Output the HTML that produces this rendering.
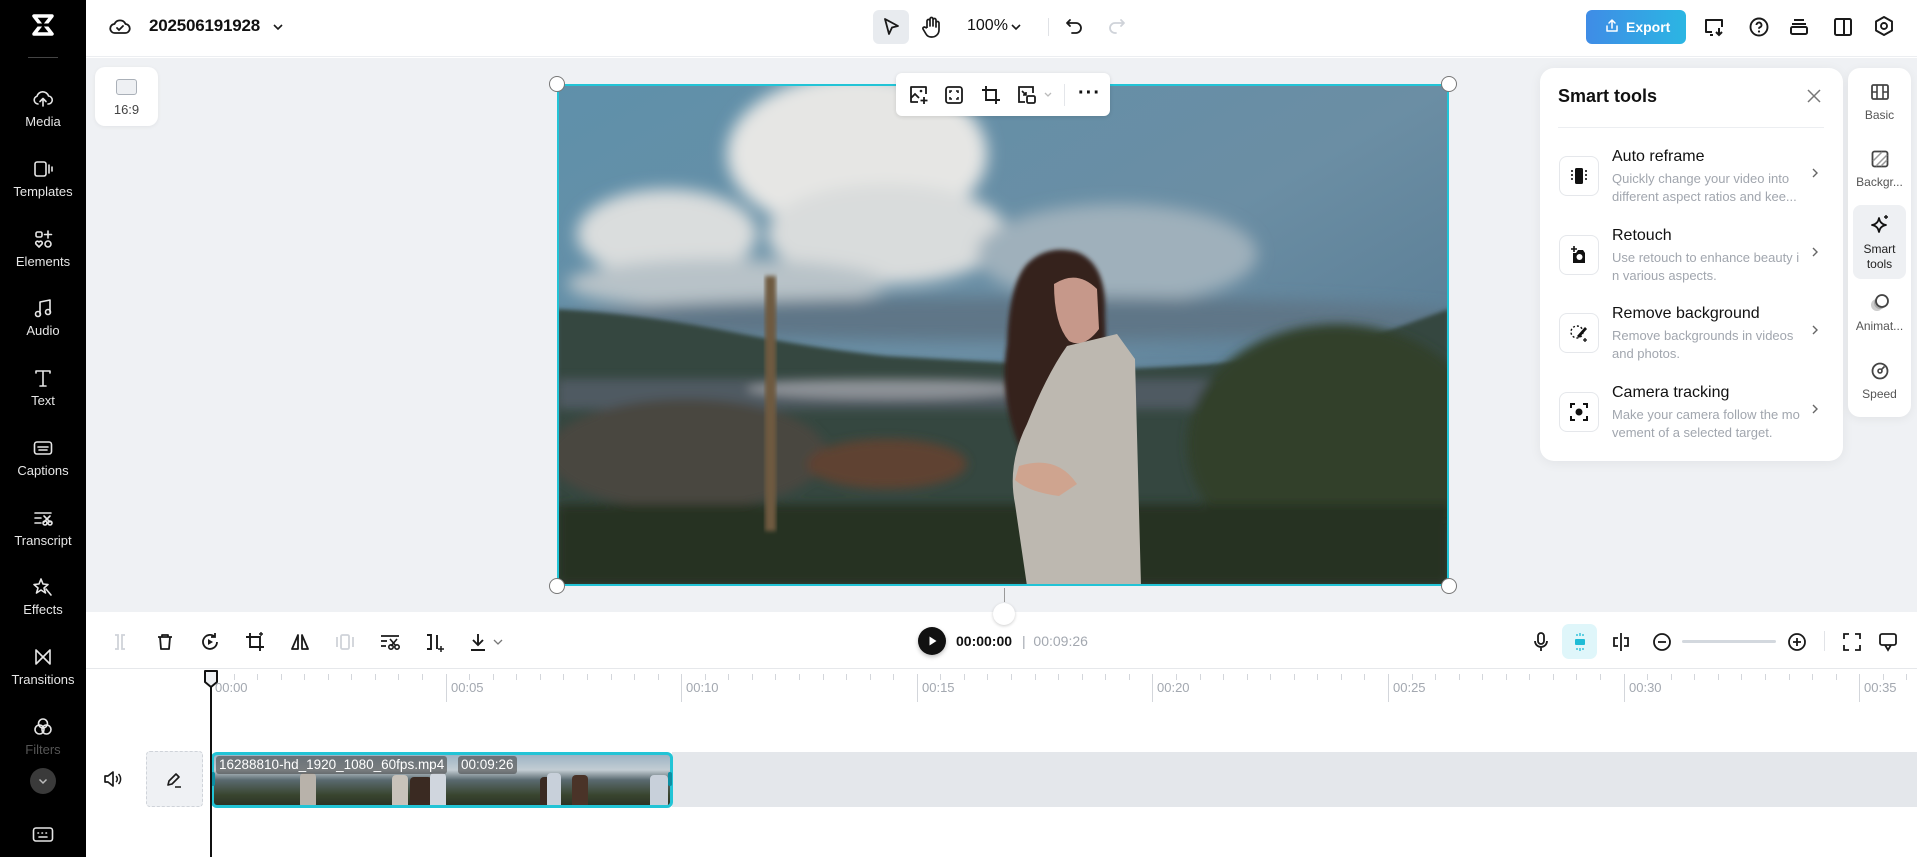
<!DOCTYPE html>
<html><head><meta charset="utf-8">
<style>
*{box-sizing:border-box;margin:0;padding:0}
body{width:1917px;height:857px;overflow:hidden;background:#fff;font-family:"Liberation Sans",sans-serif;position:relative;color:#111}
.abs{position:absolute}
svg{display:block}
.sb{position:absolute;left:0;top:0;width:86px;height:857px;background:#000}
.si{position:absolute;left:0;width:86px;text-align:center;color:#e6e6e6;font-size:13px}
.si svg{margin:0 auto 4px}
.wi{stroke:#e6e6e6;fill:none;stroke-width:1.6;stroke-linecap:round;stroke-linejoin:round}
.tick{position:absolute;top:6px;width:1px;height:6px;background:#d3d6db}
.maj{position:absolute;top:6px;width:1px;height:28px;background:#d3d6db}
.lab{position:absolute;top:12px;font-size:13px;color:#a3a8b0}
.item{position:absolute;left:1559px;width:280px;height:70px}
.item .ib{position:absolute;left:0;top:0;width:40px;height:40px;border:1px solid #e5e7eb;border-radius:8px;display:flex;align-items:center;justify-content:center}
.item .t{position:absolute;left:53px;top:-8px;font-size:16px;color:#111}
.item .d{position:absolute;left:53px;top:14px;width:190px;font-size:13px;line-height:18px;color:#a1a6ae;white-space:nowrap;overflow:hidden}
.item .c{position:absolute;left:250px;top:10px}
.tab{position:absolute;left:1848px;width:63px;text-align:center;font-size:12px;color:#555}
.tab svg{margin:0 auto 6px}
</style></head><body>

<div class="sb">
 <svg class="abs" style="left:31px;top:14px" width="24" height="22" viewBox="0 0 24 22"><path d="M3 2h18l-7 9 7 9H3l7-9z" fill="none" stroke="#fff" stroke-width="3.5" stroke-linejoin="round"/><path d="M3 11h18" stroke="#000" stroke-width="3"/></svg>
 <div class="abs" style="left:28px;top:57px;width:30px;height:1px;background:#444"></div>
 <div class="si" style="top:88px"><svg width="22" height="22" viewBox="0 0 22 22" class="wi"><path d="M6 16a4 4 0 0 1-1-7.8A6 6 0 0 1 16.5 8 4 4 0 0 1 16 16"/><path d="M11 18v-7M8 13.5l3-3 3 3"/></svg>Media</div>
 <div class="si" style="top:158px"><svg width="22" height="22" viewBox="0 0 22 22" class="wi"><rect x="3" y="4" width="11" height="14" rx="2"/><path d="M17 7v8M20 9v4"/></svg>Templates</div>
 <div class="si" style="top:228px"><svg width="22" height="22" viewBox="0 0 22 22" class="wi"><rect x="4" y="4" width="6" height="5" rx="1.5"/><path d="M16 3v7M12.5 6.5h7"/><path d="M7 19l-3-3a1.8 1.8 0 0 1 3-2 1.8 1.8 0 0 1 3 2z"/><circle cx="16" cy="16" r="3"/></svg>Elements</div>
 <div class="si" style="top:297px"><svg width="22" height="22" viewBox="0 0 22 22" class="wi"><path d="M8 17V5l10-2v12"/><circle cx="6" cy="17" r="2.5"/><circle cx="16" cy="15" r="2.5"/></svg>Audio</div>
 <div class="si" style="top:367px"><svg width="22" height="22" viewBox="0 0 22 22" class="wi"><path d="M4 6V4h14v2M11 4v15M8 19h6"/></svg>Text</div>
 <div class="si" style="top:437px"><svg width="22" height="22" viewBox="0 0 22 22" class="wi"><rect x="2.5" y="5" width="17" height="12" rx="2.5"/><path d="M6 10h10M7 13h8"/></svg>Captions</div>
 <div class="si" style="top:507px"><svg width="22" height="22" viewBox="0 0 22 22" class="wi"><path d="M3 6h16M3 11h6M3 16h6"/><circle cx="13" cy="16" r="2"/><circle cx="18" cy="16" r="2"/><path d="M12 9l6 6M18 9l-6 6"/></svg>Transcript</div>
 <div class="si" style="top:576px"><svg width="22" height="22" viewBox="0 0 22 22" class="wi"><path d="M9 3l2 5 5 .5-4 3.5 1.5 5L9 14l-4.5 3 1.5-5-4-3.5 5-.5z"/><path d="M14 13l5 6"/></svg>Effects</div>
 <div class="si" style="top:646px"><svg width="22" height="22" viewBox="0 0 22 22" class="wi"><path d="M4 4v14l14-14v14z"/></svg>Transitions</div>
 <div class="si" style="top:716px;color:#555"><svg width="22" height="22" viewBox="0 0 22 22" class="wi"><circle cx="11" cy="7.5" r="4.5"/><circle cx="7.5" cy="13.5" r="4.5"/><circle cx="14.5" cy="13.5" r="4.5"/></svg>Filters</div>
 <div class="abs" style="left:30px;top:768px;width:26px;height:26px;border-radius:50%;background:#3a3a3a"><svg width="26" height="26" viewBox="0 0 26 26"><path d="M9.5 11.5l3.5 3.5 3.5-3.5" stroke="#bbb" stroke-width="1.5" fill="none"/></svg></div>
 <svg class="abs" style="left:31px;top:824px" width="24" height="22" viewBox="0 0 24 22"><rect x="2.5" y="4" width="19" height="13" rx="2.5" stroke="#e6e6e6" fill="none" stroke-width="1.6"/><path d="M7 9h.5M11 9h.5M15 9h.5M8 13h8" stroke="#e6e6e6" stroke-width="1.6" stroke-linecap="round"/></svg>
</div>
<div class="abs" style="left:86px;top:406px;width:6px;height:56px;background:#2a2a2a;border-radius:0 6px 6px 0"></div>

<div class="abs" style="left:86px;top:0;width:1831px;height:57px;background:#fff;border-bottom:1px solid #eceef1"></div>
<svg class="abs" style="left:108px;top:15px" width="24" height="24" viewBox="0 0 24 24"><path d="M7 18a4.5 4.5 0 0 1-.5-9 6 6 0 0 1 11 0A4.5 4.5 0 0 1 17 18z" fill="none" stroke="#1a1a1a" stroke-width="1.8" stroke-linejoin="round"/><path d="M9 13l2 2 4-4" fill="none" stroke="#1a1a1a" stroke-width="1.8" stroke-linecap="round"/></svg>
<div class="abs" style="left:149px;top:16px;font-size:17px;font-weight:bold;letter-spacing:-0.2px">202506191928</div>
<svg class="abs" style="left:271px;top:20px" width="14" height="14" viewBox="0 0 14 14"><path d="M3 5l4 4 4-4" stroke="#1a1a1a" stroke-width="1.6" fill="none"/></svg>

<div class="abs" style="left:873px;top:10px;width:36px;height:34px;background:#e8ebef;border-radius:6px"></div>
<svg class="abs" style="left:880px;top:16px" width="22" height="22" viewBox="0 0 22 22"><path d="M5 3l13 7-6 1.5L9 18z" fill="none" stroke="#1a1a1a" stroke-width="1.8" stroke-linejoin="round"/></svg>
<svg class="abs" style="left:921px;top:15px" width="22" height="24" viewBox="0 0 22 24"><path d="M6 13V6a1.5 1.5 0 0 1 3 0v5V4a1.5 1.5 0 0 1 3 0v7V5a1.5 1.5 0 0 1 3 0v7-4a1.5 1.5 0 0 1 3 0v7a7 7 0 0 1-7 7h-1a6 6 0 0 1-5-3l-3-5a1.5 1.5 0 0 1 2.5-1.5L6 13" fill="none" stroke="#1a1a1a" stroke-width="1.7" stroke-linejoin="round"/></svg>
<div class="abs" style="left:967px;top:17px;font-size:16px;color:#111">100%</div>
<svg class="abs" style="left:1009px;top:20px" width="14" height="14" viewBox="0 0 14 14"><path d="M3 5l4 4 4-4" stroke="#1a1a1a" stroke-width="1.6" fill="none"/></svg>
<div class="abs" style="left:1048px;top:18px;width:1px;height:18px;background:#e0e2e6"></div>
<svg class="abs" style="left:1063px;top:15px" width="22" height="22" viewBox="0 0 22 22"><path d="M7 5L4 8l3 3M4 8h9a5 5 0 0 1 0 10H9" fill="none" stroke="#1a1a1a" stroke-width="1.8" stroke-linecap="round" stroke-linejoin="round"/></svg>
<svg class="abs" style="left:1106px;top:15px" width="22" height="22" viewBox="0 0 22 22"><path d="M15 5l3 3-3 3M18 8H9a5 5 0 0 0 0 10h1" fill="none" stroke="#cfd3d9" stroke-width="1.8" stroke-linecap="round" stroke-linejoin="round"/></svg>

<div class="abs" style="left:1586px;top:10px;width:100px;height:34px;border-radius:6px;background:linear-gradient(90deg,#3f8ce6,#2bb6e3);color:#fff;font-weight:bold;font-size:14px;line-height:34px;padding-left:40px">Export</div>
<svg class="abs" style="left:1604px;top:18px" width="16" height="16" viewBox="0 0 16 16"><path d="M8 10V2M5 5l3-3 3 3M3 8v5h10V8" stroke="#fff" stroke-width="1.5" fill="none" stroke-linecap="round" stroke-linejoin="round"/></svg>
<svg class="abs" style="left:1702px;top:15px" width="24" height="24" viewBox="0 0 24 24"><path d="M10 17H4V5h16v7M8 20h3" stroke="#1a1a1a" stroke-width="2" fill="none" stroke-linejoin="round"/><path d="M17 13v7M14 17l3 3 3-3" stroke="#1a1a1a" stroke-width="2" fill="none"/></svg>
<svg class="abs" style="left:1747px;top:15px" width="24" height="24" viewBox="0 0 24 24"><circle cx="12" cy="12" r="8.5" stroke="#1a1a1a" stroke-width="1.9" fill="none"/><path d="M9.5 10a2.5 2.5 0 1 1 3.5 2.3c-.7.3-1 .8-1 1.5" stroke="#1a1a1a" stroke-width="1.9" fill="none"/><circle cx="12" cy="16.5" r="1.1" fill="#1a1a1a"/></svg>
<svg class="abs" style="left:1787px;top:15px" width="24" height="24" viewBox="0 0 24 24"><path d="M7 5h10M5 9h14" stroke="#1a1a1a" stroke-width="2" fill="none"/><rect x="4" y="12" width="16" height="7" rx="1.5" stroke="#1a1a1a" stroke-width="2" fill="none"/></svg>
<svg class="abs" style="left:1831px;top:15px" width="24" height="24" viewBox="0 0 24 24"><rect x="4" y="4" width="16" height="16" rx="1.5" stroke="#1a1a1a" stroke-width="2" fill="none"/><path d="M13 4v16" stroke="#1a1a1a" stroke-width="2"/></svg>
<svg class="abs" style="left:1872px;top:14px" width="24" height="26" viewBox="0 0 24 26"><path d="M12 3l8 4.5v9L12 21l-8-4.5v-9z" stroke="#1a1a1a" stroke-width="1.9" fill="none" stroke-linejoin="round"/><circle cx="12" cy="12" r="3" stroke="#1a1a1a" stroke-width="1.9" fill="none"/></svg>

<div class="abs" style="left:86px;top:58px;width:1831px;height:554px;background:#eff1f4"></div>
<div class="abs" style="left:95px;top:67px;width:63px;height:59px;background:#fff;border-radius:10px;box-shadow:0 1px 4px rgba(0,0,0,.06)"></div>
<div class="abs" style="left:116px;top:79px;width:21px;height:16px;border:1.5px solid #aab0b8;border-radius:3px;background:#eef0f3"></div>
<div class="abs" style="left:95px;top:102px;width:63px;text-align:center;font-size:13px;color:#444">16:9</div>

<div class="abs" style="left:557px;top:84px;width:892px;height:502px;overflow:hidden;border:2px solid #22c4d6">
<svg width="892" height="502" viewBox="0 0 892 502" style="position:absolute;left:-2px;top:-2px">
<defs>
<linearGradient id="sky" x1="0" y1="0" x2="1" y2="1"><stop offset="0" stop-color="#5f90aa"/><stop offset=".5" stop-color="#6b8ea4"/><stop offset="1" stop-color="#4c6f88"/></linearGradient>
<filter id="b8"><feGaussianBlur stdDeviation="8"/></filter>
<filter id="b5"><feGaussianBlur stdDeviation="5"/></filter>
<filter id="b2"><feGaussianBlur stdDeviation="2"/></filter>
</defs>
<rect width="892" height="502" fill="url(#sky)"/>
<g filter="url(#b8)">
<ellipse cx="300" cy="70" rx="130" ry="80" fill="#e6e6e4"/>
<ellipse cx="330" cy="150" rx="120" ry="50" fill="#d9dcdc"/>
<ellipse cx="110" cy="150" rx="90" ry="45" fill="#dadddd"/>
<ellipse cx="170" cy="200" rx="160" ry="25" fill="#b8c2c8"/>
<ellipse cx="560" cy="170" rx="140" ry="50" fill="#9fb0bb"/>
<ellipse cx="460" cy="235" rx="460" ry="22" fill="#5e7687"/>
</g>
<path d="M0 225 Q80 230 160 245 Q260 265 330 272 L560 285 Q700 280 780 265 Q850 240 892 225 V502 H0z" fill="#364640" filter="url(#b2)"/>
<g filter="url(#b5)">
<rect x="0" y="295" width="892" height="30" fill="#4f5a62"/>
<ellipse cx="330" cy="305" rx="140" ry="10" fill="#8c9196"/>
<ellipse cx="130" cy="370" rx="140" ry="55" fill="#4a4640"/>
<ellipse cx="330" cy="380" rx="80" ry="25" fill="#5e4233"/>
<ellipse cx="780" cy="360" rx="150" ry="120" fill="#33412a"/>
<rect x="0" y="420" width="892" height="82" fill="#283022"/>
</g>
<rect x="208" y="192" width="11" height="255" fill="#6e5a3f" filter="url(#b2)"/>
<path d="M470 180 Q490 160 520 168 Q550 180 548 230 L550 290 L520 330 L500 390 L470 380 Q440 320 450 260 Q452 200 470 180z" fill="#35201a" filter="url(#b2)"/>
<path d="M497 200 Q520 185 540 205 L542 245 Q527 265 512 257 Q497 240 497 200z" fill="#c6988a"/>
<path d="M510 262 L560 250 L578 275 L584 502 L470 502 L458 420 Q450 380 470 340 Q490 290 510 262z" fill="#bdb8b0"/>
<path d="M462 382 Q500 370 520 400 L502 412 Q472 408 458 396z" fill="#cfa48f"/>
</svg>
</div>
<div class="abs" style="left:549px;top:76px;width:16px;height:16px;border-radius:50%;background:#fff;border:1px solid #777"></div>
<div class="abs" style="left:1441px;top:76px;width:16px;height:16px;border-radius:50%;background:#fff;border:1px solid #777"></div>
<div class="abs" style="left:549px;top:578px;width:16px;height:16px;border-radius:50%;background:#fff;border:1px solid #777"></div>
<div class="abs" style="left:1441px;top:578px;width:16px;height:16px;border-radius:50%;background:#fff;border:1px solid #777"></div>
<div class="abs" style="left:1004px;top:588px;width:1px;height:14px;background:#999"></div>
<div class="abs" style="left:993px;top:603px;width:22px;height:22px;border-radius:50%;background:#fff;box-shadow:0 1px 3px rgba(0,0,0,.2)"></div>

<div class="abs" style="left:896px;top:73px;width:214px;height:43px;background:#fff;border-radius:6px;box-shadow:0 1px 4px rgba(0,0,0,.12)"></div>
<svg class="abs" style="left:907px;top:83px" width="24" height="24" viewBox="0 0 24 24"><path d="M11 19H4V4h15v7" stroke="#1a1a1a" stroke-width="1.8" fill="none" stroke-linejoin="round"/><path d="M4 15l4-4 4 4M17 14v7M13.5 17.5h7" stroke="#1a1a1a" stroke-width="1.8" fill="none"/><circle cx="14" cy="8" r="1.3" fill="#1a1a1a"/></svg>
<svg class="abs" style="left:942px;top:83px" width="24" height="24" viewBox="0 0 24 24"><rect x="4" y="4" width="16" height="16" rx="2.5" stroke="#1a1a1a" stroke-width="1.8" fill="none"/><path d="M8 10V8h2M14 8h2v2M16 14v2h-2M10 16H8v-2" stroke="#1a1a1a" stroke-width="1.6" fill="none"/></svg>
<svg class="abs" style="left:979px;top:83px" width="24" height="24" viewBox="0 0 24 24"><path d="M7 3v14h14M3 7h14v14" stroke="#1a1a1a" stroke-width="1.9" fill="none"/></svg>
<svg class="abs" style="left:1015px;top:83px" width="24" height="24" viewBox="0 0 24 24"><path d="M10 19H4V4h14v6" stroke="#1a1a1a" stroke-width="1.8" fill="none"/><rect x="12" y="13" width="8" height="7" rx="1.5" stroke="#1a1a1a" stroke-width="1.8" fill="none"/><path d="M7 8l4 4M11 9v3H8" stroke="#1a1a1a" stroke-width="1.6" fill="none"/></svg>
<svg class="abs" style="left:1042px;top:88px" width="12" height="12" viewBox="0 0 12 12"><path d="M3 5l3 3 3-3" stroke="#bbb" stroke-width="1.3" fill="none"/></svg>
<div class="abs" style="left:1064px;top:84px;width:1px;height:22px;background:#e4e6ea"></div>
<div class="abs" style="left:1078px;top:82px;font-size:20px;font-weight:bold;letter-spacing:1px">···</div>

<div class="abs" style="left:1540px;top:68px;width:303px;height:393px;background:#fff;border-radius:14px;box-shadow:0 2px 12px rgba(0,0,0,.06)"></div>
<div class="abs" style="left:1558px;top:86px;font-size:18px;font-weight:bold">Smart tools</div>
<svg class="abs" style="left:1806px;top:88px" width="16" height="16" viewBox="0 0 16 16"><path d="M2 2l12 12M14 2L2 14" stroke="#777" stroke-width="1.5"/></svg>
<div class="abs" style="left:1558px;top:127px;width:266px;height:1px;background:#eceef1"></div>

<div class="item" style="top:156px"><div class="ib"><svg width="22" height="22" viewBox="0 0 22 22"><rect x="7" y="3" width="8" height="16" rx="1.5" fill="#111"/><path d="M4 5v12M18 5v12" stroke="#111" stroke-width="1.6" stroke-dasharray="2 2"/></svg></div><div class="t">Auto reframe</div><div class="d">Quickly change your video into<br>different aspect ratios and kee...</div><svg class="c" width="12" height="14" viewBox="0 0 12 14"><path d="M4 3l4 4-4 4" stroke="#666" stroke-width="1.4" fill="none"/></svg></div>
<div class="item" style="top:235px"><div class="ib"><svg width="22" height="22" viewBox="0 0 22 22"><path d="M5 9h3l2-3h5l2 3v10H5z" fill="#111"/><circle cx="11.5" cy="13" r="3" fill="#fff"/><path d="M6 2v6M3 5h6" stroke="#111" stroke-width="1.6"/></svg></div><div class="t">Retouch</div><div class="d">Use retouch to enhance beauty i<br>n various aspects.</div><svg class="c" width="12" height="14" viewBox="0 0 12 14"><path d="M4 3l4 4-4 4" stroke="#666" stroke-width="1.4" fill="none"/></svg></div>
<div class="item" style="top:313px"><div class="ib"><svg width="22" height="22" viewBox="0 0 22 22"><circle cx="9" cy="10" r="6" stroke="#111" stroke-width="1.4" fill="none" stroke-dasharray="2 2"/><path d="M17 5l-8 9 2 2 8-9z" fill="#111"/><path d="M17 16v4M15 18h4" stroke="#111" stroke-width="1.3"/></svg></div><div class="t">Remove background</div><div class="d">Remove backgrounds in videos<br>and photos.</div><svg class="c" width="12" height="14" viewBox="0 0 12 14"><path d="M4 3l4 4-4 4" stroke="#666" stroke-width="1.4" fill="none"/></svg></div>
<div class="item" style="top:392px"><div class="ib"><svg width="22" height="22" viewBox="0 0 22 22"><path d="M3 7V3h4M15 3h4v4M19 15v4h-4M7 19H3v-4" stroke="#111" stroke-width="2" fill="none"/><circle cx="11" cy="11" r="3.5" fill="#111"/></svg></div><div class="t">Camera tracking</div><div class="d">Make your camera follow the mo<br>vement of a selected target.</div><svg class="c" width="12" height="14" viewBox="0 0 12 14"><path d="M4 3l4 4-4 4" stroke="#666" stroke-width="1.4" fill="none"/></svg></div>

<div class="abs" style="left:1848px;top:68px;width:63px;height:349px;background:#fff;border-radius:12px;box-shadow:0 2px 10px rgba(0,0,0,.06)"></div>
<div class="abs" style="left:1853px;top:205px;width:53px;height:74px;background:#eef0f3;border-radius:8px"></div>
<div class="tab" style="top:82px"><svg width="20" height="20" viewBox="0 0 20 20"><rect x="2" y="3" width="16" height="14" rx="1.5" stroke="#444" stroke-width="1.8" fill="none"/><path d="M7 3v14M13 3v14M2 10h5M13 10h5" stroke="#444" stroke-width="1.6"/></svg>Basic</div>
<div class="tab" style="top:149px"><svg width="20" height="20" viewBox="0 0 20 20"><rect x="2.5" y="2.5" width="15" height="15" rx="2" stroke="#444" stroke-width="1.8" fill="none"/><path d="M3 12l9-9M6 17l11-11M11 17l6-6" stroke="#999" stroke-width="1.5"/></svg>Backgr...</div>
<div class="tab" style="top:214px;color:#222;line-height:15px"><svg width="22" height="22" viewBox="0 0 22 22"><path d="M10 4q1 6 7 7-6 1-7 7-1-6-7-7 6-1 7-7z" stroke="#111" stroke-width="1.8" fill="none" stroke-linejoin="round"/><path d="M17 1v4M15 3h4" stroke="#111" stroke-width="1.4"/></svg>Smart<br>tools</div>
<div class="tab" style="top:293px"><svg width="22" height="20" viewBox="0 0 22 20"><circle cx="8" cy="12" r="6" fill="#ccc"/><circle cx="11" cy="10" r="6" fill="#aaa"/><circle cx="13" cy="8" r="6" stroke="#444" stroke-width="1.8" fill="#fff"/></svg>Animat...</div>
<div class="tab" style="top:361px"><svg width="20" height="20" viewBox="0 0 20 20"><circle cx="10" cy="10" r="7.5" stroke="#444" stroke-width="1.8" fill="none"/><circle cx="10" cy="10" r="2" stroke="#444" stroke-width="1.6" fill="none"/><path d="M11.5 8.5l3-3" stroke="#444" stroke-width="1.6"/></svg>Speed</div>

<svg class="abs" style="left:108px;top:630px" width="24" height="24" viewBox="0 0 24 24"><path d="M7 5h3v14H7M17 5h-3v14h3" stroke="#cfd3d9" stroke-width="1.8" fill="none"/></svg>
<svg class="abs" style="left:153px;top:630px" width="24" height="24" viewBox="0 0 24 24"><path d="M5 7h14M9 7V5h6v2M7 7l1 12h8l1-12" stroke="#1a1a1a" stroke-width="1.8" fill="none" stroke-linejoin="round"/></svg>
<svg class="abs" style="left:198px;top:630px" width="24" height="24" viewBox="0 0 24 24"><path d="M19 12a7 7 0 1 1-2-5M17 3v4h-4" stroke="#1a1a1a" stroke-width="1.8" fill="none"/><path d="M10 9l5 3-5 3z" fill="#1a1a1a"/></svg>
<svg class="abs" style="left:243px;top:630px" width="24" height="24" viewBox="0 0 24 24"><path d="M7 3v14h14M3 7h14v14" stroke="#1a1a1a" stroke-width="1.9" fill="none"/><path d="M18 2v4M16 4h4" stroke="#1a1a1a" stroke-width="1.4"/></svg>
<svg class="abs" style="left:288px;top:630px" width="24" height="24" viewBox="0 0 24 24"><path d="M10 5L4 19h6zM14 5l6 14h-6z" stroke="#1a1a1a" stroke-width="1.8" fill="none" stroke-linejoin="round"/></svg>
<svg class="abs" style="left:333px;top:630px" width="24" height="24" viewBox="0 0 24 24"><rect x="8" y="5" width="8" height="14" rx="1.5" stroke="#cfd3d9" stroke-width="1.8" fill="none"/><path d="M4 7v10M20 7v10" stroke="#cfd3d9" stroke-width="1.8"/></svg>
<svg class="abs" style="left:378px;top:630px" width="24" height="24" viewBox="0 0 24 24"><path d="M3 6h18M3 11h6M3 16h5" stroke="#1a1a1a" stroke-width="1.7"/><circle cx="13" cy="17" r="2.2" stroke="#1a1a1a" stroke-width="1.6" fill="none"/><circle cx="19" cy="17" r="2.2" stroke="#1a1a1a" stroke-width="1.6" fill="none"/><path d="M12 9l6 7M19 9l-6 7" stroke="#1a1a1a" stroke-width="1.6"/></svg>
<svg class="abs" style="left:422px;top:630px" width="24" height="24" viewBox="0 0 24 24"><path d="M5 5h4v14H5M15 5v14" stroke="#1a1a1a" stroke-width="1.9" fill="none"/><path d="M19 16v6M16 19h6" stroke="#1a1a1a" stroke-width="1.5"/></svg>
<svg class="abs" style="left:466px;top:630px" width="24" height="24" viewBox="0 0 24 24"><path d="M12 4v11M7 10l5 5 5-5M5 20h14" stroke="#1a1a1a" stroke-width="1.9" fill="none"/></svg>
<svg class="abs" style="left:492px;top:636px" width="12" height="12" viewBox="0 0 12 12"><path d="M2 4l4 4 4-4" stroke="#777" stroke-width="1.3" fill="none"/></svg>

<div class="abs" style="left:918px;top:627px;width:28px;height:28px;border-radius:50%;background:#111;box-shadow:0 2px 4px rgba(0,0,0,.25)"></div>
<svg class="abs" style="left:918px;top:627px" width="28" height="28" viewBox="0 0 28 28"><path d="M11.5 9.5l7 4.5-7 4.5z" fill="#fff"/></svg>
<div class="abs" style="left:956px;top:633px;font-size:14px;font-weight:bold">00:00:00</div>
<div class="abs" style="left:1022px;top:633px;font-size:14px;color:#a3a8b0">| &nbsp;00:09:26</div>

<svg class="abs" style="left:1529px;top:630px" width="24" height="24" viewBox="0 0 24 24"><rect x="9" y="3" width="6" height="11" rx="3" stroke="#1a1a1a" stroke-width="1.8" fill="none"/><path d="M6 11a6 6 0 0 0 12 0M12 17v4" stroke="#1a1a1a" stroke-width="1.8" fill="none"/></svg>
<div class="abs" style="left:1562px;top:624px;width:35px;height:35px;border-radius:7px;background:#dff6fa"></div>
<svg class="abs" style="left:1568px;top:630px" width="24" height="24" viewBox="0 0 24 24"><rect x="7" y="9" width="10" height="6" rx="1" fill="#1ebcd6"/><path d="M12 3v3M12 18v3M9 4v2M15 4v2M9 18v2M15 18v2" stroke="#1ebcd6" stroke-width="1.3"/></svg>
<svg class="abs" style="left:1609px;top:630px" width="24" height="24" viewBox="0 0 24 24"><path d="M12 3v18M9 8H5v8h4M15 8h4v8h-4" stroke="#1a1a1a" stroke-width="1.8" fill="none"/></svg>
<svg class="abs" style="left:1650px;top:630px" width="24" height="24" viewBox="0 0 24 24"><circle cx="12" cy="12" r="8" stroke="#1a1a1a" stroke-width="1.8" fill="none"/><path d="M8 12h8" stroke="#1a1a1a" stroke-width="1.8"/></svg>
<div class="abs" style="left:1682px;top:640px;width:94px;height:3px;background:#d3d8de;border-radius:2px"></div>
<svg class="abs" style="left:1785px;top:630px" width="24" height="24" viewBox="0 0 24 24"><circle cx="12" cy="12" r="8" stroke="#1a1a1a" stroke-width="1.8" fill="none"/><path d="M8 12h8M12 8v8" stroke="#1a1a1a" stroke-width="1.8"/></svg>
<div class="abs" style="left:1824px;top:631px;width:1px;height:20px;background:#e1e3e7"></div>
<svg class="abs" style="left:1840px;top:630px" width="24" height="24" viewBox="0 0 24 24"><path d="M4 9V4h5M15 4h5v5M20 15v5h-5M9 20H4v-5" stroke="#1a1a1a" stroke-width="1.8" fill="none"/></svg>
<svg class="abs" style="left:1876px;top:630px" width="24" height="24" viewBox="0 0 24 24"><rect x="4" y="4" width="16" height="11" rx="2" stroke="#1a1a1a" stroke-width="1.8" fill="none"/><path d="M9 15l3 5 3-5" stroke="#1a1a1a" stroke-width="1.8" fill="none"/></svg>

<div class="abs" style="left:86px;top:668px;width:1831px;height:1px;background:#e6e8eb"></div>
<div id="ruler" class="abs" style="left:0;top:668px;width:1917px;height:40px;overflow:hidden"></div>
<script>
(function(){var h='';var p=235.6;for(var i=0;i<8;i++){var x=210+i*p;h+='<div class="maj" style="left:'+Math.round(x)+'px"></div>';var s=i*5;h+='<div class="lab" style="left:'+Math.round(x+5)+'px">00:'+(s<10?'0':'')+s+'</div>';for(var j=1;j<10;j++){var xx=x+j*p/10;if(xx<1910)h+='<div class="tick" style="left:'+Math.round(xx)+'px"></div>';}}document.getElementById('ruler').innerHTML=h;})();
</script>

<svg class="abs" style="left:102px;top:769px" width="22" height="20" viewBox="0 0 22 20"><path d="M3 7h3l5-4v14l-5-4H3z" stroke="#1a1a1a" stroke-width="1.7" fill="none" stroke-linejoin="round"/><path d="M14 7a4 4 0 0 1 0 6M16.5 5a7 7 0 0 1 0 10" stroke="#1a1a1a" stroke-width="1.5" fill="none"/></svg>
<div class="abs" style="left:146px;top:751px;width:57px;height:56px;background:#eff1f4;border:1px dashed #cfd3d9;border-radius:4px"></div>
<svg class="abs" style="left:164px;top:770px" width="20" height="20" viewBox="0 0 20 20"><path d="M4 15l1-4 7-7 3 3-7 7zM11 17h6" stroke="#1a1a1a" stroke-width="1.6" fill="none" stroke-linejoin="round"/></svg>
<div class="abs" style="left:672px;top:752px;width:1245px;height:55px;background:#e4e7eb"></div>
<div class="abs" style="left:211px;top:752px;width:462px;height:56px;border:3px solid #22c4d6;border-radius:6px;overflow:hidden;background:linear-gradient(180deg,#9db4c4 0%,#c3cdd3 30%,#5a6a70 50%,#39452f 80%,#2c3426 100%)">
 <div class="abs" style="left:86px;top:18px;width:16px;height:35px;background:#b8b2aa;border-radius:4px"></div>
 <div class="abs" style="left:178px;top:20px;width:16px;height:35px;background:#c8c2ba;border-radius:4px"></div>
 <div class="abs" style="left:196px;top:22px;width:22px;height:33px;background:#3a2a22;border-radius:4px"></div>
 <div class="abs" style="left:216px;top:18px;width:16px;height:37px;background:#d0d6de;border-radius:4px"></div>
 <div class="abs" style="left:326px;top:22px;width:20px;height:33px;background:#3a2a22;border-radius:4px"></div>
 <div class="abs" style="left:333px;top:18px;width:14px;height:37px;background:#c8d0da;border-radius:4px"></div>
 <div class="abs" style="left:358px;top:20px;width:16px;height:35px;background:#4a3328;border-radius:4px"></div>
 <div class="abs" style="left:436px;top:20px;width:18px;height:35px;background:#c8d0da;border-radius:4px"></div>
</div>
<div class="abs" style="left:216px;top:756px;padding:0 3px;height:18px;line-height:18px;background:rgba(70,70,70,.6);color:#fff;font-size:13.5px;border-radius:3px">16288810-hd_1920_1080_60fps.mp4</div>
<div class="abs" style="left:458px;top:756px;padding:0 3px;height:18px;line-height:18px;background:rgba(70,70,70,.6);color:#fff;font-size:13.5px;border-radius:3px">00:09:26</div>
<div class="abs" style="left:211px;top:772px;width:4px;height:14px;background:#0c8fa3;border-radius:2px"></div>
<div class="abs" style="left:668px;top:772px;width:4px;height:14px;background:#0c8fa3;border-radius:2px"></div>

<div class="abs" style="left:210px;top:680px;width:2px;height:177px;background:#111"></div>
<svg class="abs" style="left:203px;top:669px" width="16" height="20" viewBox="0 0 16 20"><path d="M2 2h12v11l-6 5-6-5z" fill="#eff1f4" stroke="#111" stroke-width="2" stroke-linejoin="round"/></svg>
</body></html>
